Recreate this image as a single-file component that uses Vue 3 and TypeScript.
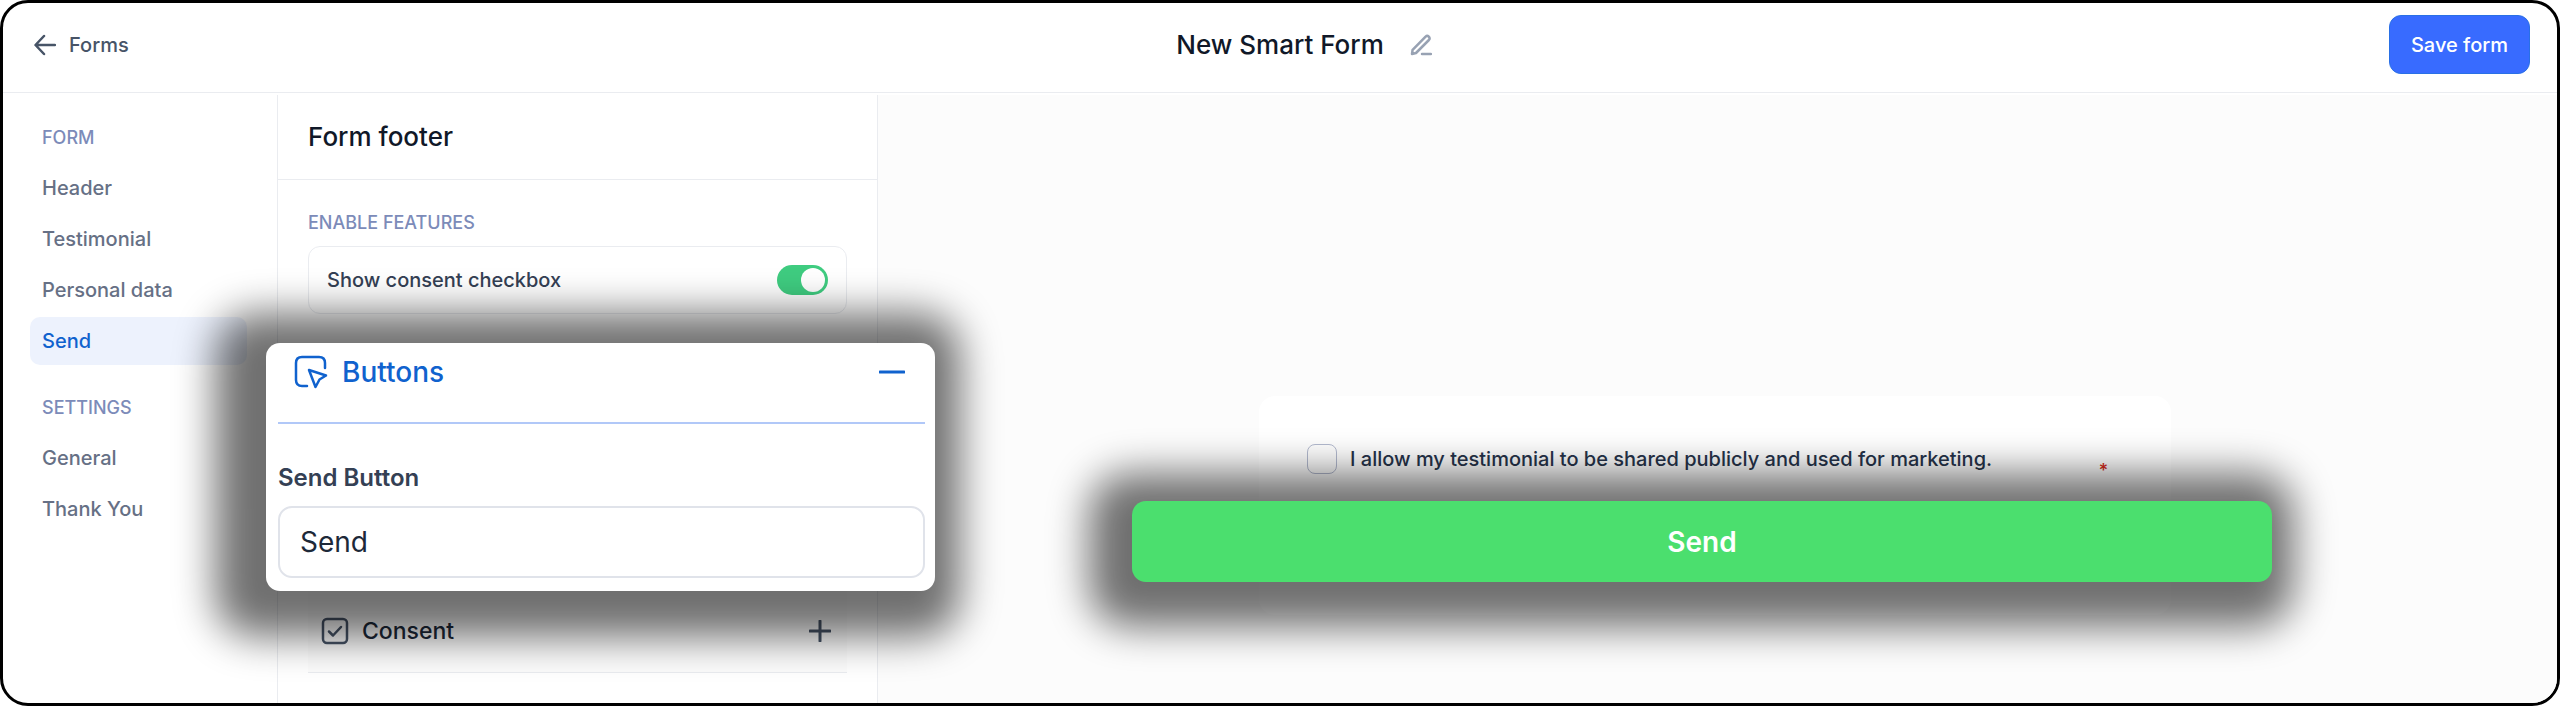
<script setup lang="ts">
import { ref } from 'vue'

interface NavGroup {
  label: string
  items: string[]
}

const groups: NavGroup[] = [
  { label: 'FORM', items: ['Header', 'Testimonial', 'Personal data', 'Send'] },
  { label: 'SETTINGS', items: ['General', 'Thank You'] },
]

const active = ref('Send')
const showConsent = ref(true)
const agreed = ref(false)
const sendLabel = ref('Send')
</script>

<template>
  <div class="frame">
    <header class="topbar">
      <a class="back" href="#forms">
        <svg width="22" height="22" viewBox="0 0 22 22" aria-hidden="true">
          <path d="M21 11H2M10 2L1.500 11L10 20" />
        </svg>
        Forms
      </a>
      <div class="title">
        <h1>New Smart Form</h1>
        <button class="icon-button" type="button" aria-label="Rename form">
          <svg width="22" height="22" viewBox="0 0 22 22" aria-hidden="true">
            <path d="M2 20L2.600 15.800L15.600 2.600Q17.200 1.200 18.800 2.700Q20.300 4.400 18.900 6L6 19ZM12 20H21" />
          </svg>
        </button>
      </div>
      <button class="save" type="button">Save form</button>
    </header>

    <div class="body">
      <nav class="sidebar">
        <section v-for="group in groups" :key="group.label" class="group">
          <h2 class="caption">{{ group.label }}</h2>
          <a
            v-for="item in group.items"
            :key="item"
            href="#"
            :class="['nav-item', { active: item === active }]"
            @click.prevent="active = item"
          >{{ item }}</a>
        </section>
      </nav>

      <section class="panel">
        <h2 class="panel-title">Form footer</h2>
        <div class="panel-body">
          <h3 class="caption">ENABLE FEATURES</h3>
          <label class="feature">
            Show consent checkbox
            <input v-model="showConsent" class="switch" type="checkbox" role="switch" />
          </label>
          <button class="accordion" type="button">
            <svg class="consent-icon" width="28" height="28" viewBox="0 0 28 28" aria-hidden="true">
              <rect x="2" y="2" width="24" height="24" rx="4" />
              <path d="M8 14.500L12 18.500L20 10" />
            </svg>
            <span>Consent</span>
            <svg class="plus" width="22" height="22" viewBox="0 0 22 22" aria-hidden="true">
              <path d="M1 11H21M11 1V21" />
            </svg>
          </button>
        </div>

        <div class="spotlight popup">
          <div class="popup-card">
            <button class="popup-head" type="button">
              <svg width="34" height="34" viewBox="0 0 34 34" aria-hidden="true">
                <path d="M13 31H8Q2 31 2 25V8Q2 2 8 2H25Q31 2 31 8V13" />
                <path d="M15 15L32 20.500L25.500 24.500L21.500 32Z" />
              </svg>
              <span>Buttons</span>
              <svg class="minus" width="26" height="26" viewBox="0 0 26 26" aria-hidden="true">
                <path d="M1 13H25" />
              </svg>
            </button>
            <label class="field-label" for="send-label">Send Button</label>
            <input id="send-label" v-model="sendLabel" class="field" type="text" />
          </div>
        </div>
      </section>

      <main class="preview">
        <div class="card">
          <label class="consent">
            <input v-model="agreed" type="checkbox" />
            <span class="consent-text">I allow my testimonial to be shared publicly and used for marketing.</span>
            <span class="required">*</span>
          </label>
          <div class="spotlight send-wrap">
            <button class="send" type="button">{{ sendLabel }}</button>
          </div>
        </div>
      </main>
    </div>
  </div>
</template>

<style>
body {
  margin: 0;
  background: #fff;
}
</style>

<style scoped>
* {
  box-sizing: border-box;
}

.frame {
  display: flex;
  flex-direction: column;
  min-height: 100vh;
  overflow: hidden;
  border: 3px solid #000;
  border-radius: 28px;
  background: #fff;
  color: #344054;
  font-family: Inter, "Liberation Sans", sans-serif;
  font-size: 20px;
  font-weight: 500;
  line-height: 28px;
}

h1,
h2,
h3 {
  margin: 0;
  font-weight: 500;
}

a {
  color: inherit;
  text-decoration: none;
}

button,
input {
  font: inherit;
}

button {
  padding: 0;
  border: 0;
  background: none;
  cursor: pointer;
}

svg {
  flex: none;
  fill: none;
  stroke: currentColor;
  stroke-width: 2.5;
  stroke-linecap: round;
  stroke-linejoin: round;
}

.topbar {
  display: grid;
  grid-template-columns: 1fr auto 1fr;
  align-items: center;
  height: 90px;
  padding: 0 27px 6px;
  border-bottom: 1px solid #eaecf0;
}

.back {
  display: flex;
  align-items: center;
  gap: 13px;
  padding-left: 4px;
  color: #475467;
}

.title {
  display: flex;
  align-items: center;
  gap: 26px;
  padding-left: 48px;
}

h1,
.panel-title {
  color: #101828;
  font-size: 26px;
  line-height: 32px;
}

.icon-button {
  display: flex;
  color: #98a2b3;
}

.save {
  justify-self: end;
  height: 59px;
  padding: 0 21px;
  border: 1px solid #2970e6;
  border-radius: 12px;
  background: #386bff;
  color: #fff;
}

.body {
  display: flex;
  flex: 1;
  padding-top: 2px;
}

.sidebar {
  flex: 0 0 275px;
  padding: 29px 30px 0 27px;
  border-right: 1px solid #eaecf0;
}

.group {
  display: flex;
  flex-direction: column;
  gap: 3px;
  margin-bottom: 29px;
}

.caption {
  color: #7c8bb9;
  font-size: 18px;
  line-height: 28px;
}

.group .caption {
  padding: 0 12px;
  margin-bottom: 9px;
}

.nav-item {
  padding: 10px 12px;
  border-radius: 10px;
  color: #667085;
}

.nav-item.active {
  background: #edf2fd;
  color: #1062ce;
}

.panel {
  position: relative;
  z-index: 1;
  flex: 0 0 600px;
  border-right: 1px solid #eaecf0;
}

.panel-title {
  padding: 26px 30px;
  border-bottom: 1px solid #eaecf0;
}

.panel-body {
  padding: 29px 30px 0;
}

.feature {
  display: flex;
  align-items: center;
  justify-content: space-between;
  height: 68px;
  margin-top: 9px;
  padding: 0 18px;
  border: 1px solid #eaecf0;
  border-radius: 12px;
}

.switch {
  display: flex;
  align-items: center;
  width: 51px;
  height: 30px;
  margin: 0;
  padding: 3px;
  border-radius: 15px;
  background: #d0d5dd;
  appearance: none;
}

.switch::before {
  width: 24px;
  height: 24px;
  border-radius: 50%;
  background: #fff;
  content: "";
}

.switch:checked {
  justify-content: flex-end;
  background: #3fcc80;
}

.accordion {
  display: flex;
  align-items: center;
  gap: 13px;
  width: 100%;
  height: 84px;
  margin-top: 275px;
  padding: 0 16px 0 13px;
  border-bottom: 1px solid #eaecf0;
  background: #fcfcfc;
  color: #1d2939;
  font-size: 23px;
}

.consent-icon,
.plus {
  color: #475467;
}

.plus,
.minus {
  margin-left: auto;
}

.plus {
  stroke-width: 3;
}

/* Highlighted blocks float over a dimming halo. */
.spotlight {
  position: absolute;
  z-index: 1;
}

.spotlight::before {
  position: absolute;
  z-index: -1;
  border-radius: 40px;
  background: #000;
  opacity: 0.56;
  filter: blur(20px);
  content: "";
}

.popup {
  top: 248px;
  right: -58px;
  left: -12px;
}

.popup::before {
  inset: -30px -25px -46px -51px;
}

.popup-card {
  display: flex;
  flex-direction: column;
  padding: 0 10px 13px 12px;
  border-radius: 14px;
  background: #fff;
}

.popup-head {
  display: flex;
  align-items: center;
  gap: 14px;
  height: 81px;
  padding: 0 20px 22px 16px;
  border-bottom: 2px solid #b1c8f8;
  color: #1062ce;
  font-size: 28px;
}

.minus {
  stroke-width: 3;
}

.field-label {
  margin: 39px 0 13px;
  font-size: 24px;
  font-weight: 600;
  line-height: 30px;
}

.field {
  width: 100%;
  height: 72px;
  padding: 0 20px;
  border: 2px solid #e0e3ea;
  border-radius: 14px;
  background: #fff;
  color: #1d2939;
  font-size: 28px;
  font-weight: 400;
}

.preview {
  flex: 1;
  padding: 301px 386px 88px 381px;
  background: #fcfcfc;
}

.card {
  position: relative;
  z-index: 1;
  height: 219px;
  padding: 48px;
  border-radius: 16px;
  background: #fff;
}

.consent {
  display: flex;
  align-items: center;
  gap: 13px;
}

.consent input {
  width: 30px;
  height: 30px;
  margin: 0;
  border: 1px solid #b4bbd0;
  border-radius: 8px;
  background: transparent;
  appearance: none;
}

.consent input:checked {
  background: #386bff;
}

.consent-text {
  flex: 1;
  color: #26334a;
}

.required {
  align-self: flex-end;
  margin-right: 15px;
  color: #d92d20;
  font-size: 18px;
  line-height: 6px;
}

.send-wrap {
  top: 105px;
  right: -101px;
  left: -127px;
}

.send-wrap::before {
  inset: -28px -22px -45px -43px;
}

.send {
  width: 100%;
  height: 81px;
  border-radius: 14px;
  background: #4bdf6e;
  color: #fff;
  font-size: 28px;
  font-weight: 600;
}
</style>
